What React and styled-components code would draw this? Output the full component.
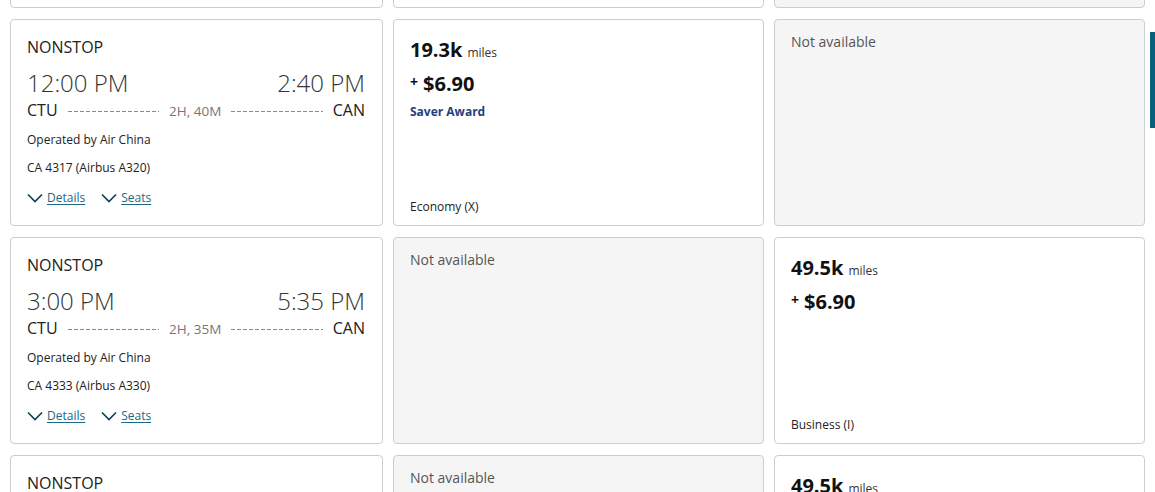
import styled, { createGlobalStyle } from "styled-components"

const Global = createGlobalStyle`
    html, body {
        margin: 0;
        padding: 0;
        background: #fff;
        overflow: hidden;
        font-family: "Open Sans", "Liberation Sans", sans-serif;
        color: #333;
    }
`

const Page = styled.div`
    height: 492px;
    overflow: hidden;
    padding: 0 10px;
`

const Results = styled.div`
    display: grid;
    grid-template-columns: 373px 371px 371px;
    grid-auto-rows: 207px;
    column-gap: 10px;
    row-gap: 11px;
    margin-top: -199px;
`

const Card = styled.div`
    box-sizing: border-box;
    border: 1px solid #cdcdcd;
    border-radius: 4px;
    background-color: ${(p) => (p.$muted ? "#f5f5f5" : "#fff")};
    display: flex;
    flex-direction: column;
`

const FlightCard = styled(Card)`
    padding: 16px 17px 14px 16px;
`

const Stops = styled.div`
    font-size: 16px;
    line-height: 22px;
    color: #222;
`

const Times = styled.div`
    display: flex;
    justify-content: space-between;
    margin-top: 11px;
    font-size: 24px;
    line-height: 28px;
    font-weight: 300;
    color: #333;
`

const Route = styled.div`
    display: flex;
    align-items: center;
    margin-top: 2px;
    font-size: 16px;
    line-height: 20px;
    color: #222;
`

const Dashes = styled.span`
    flex: 1;
    height: 1px;
    margin: 2px 10px 0;
    background: repeating-linear-gradient(to right, #8a8a8a 0 4px, transparent 4px 6px);
`

const Duration = styled.span`
    font-size: 13.5px;
    color: #777;
    margin-top: 2px;
`

const Info = styled.div`
    margin-top: ${(p) => p.$gap || 10}px;
    font-size: 12px;
    line-height: 18px;
    color: #222;
`

const Links = styled.div`
    display: flex;
    gap: 16px;
    margin-top: 12px;
`

const Toggle = styled.a`
    display: flex;
    align-items: center;
    gap: 4px;
    font-size: 12px;
    line-height: 18px;
    color: #1c6a85;
    text-decoration: underline;
    text-underline-offset: 2px;
    cursor: pointer;
    svg {
        display: block;
    }
`

const FareCard = styled(Card)`
    padding: 17px 16px 9px;
`

const Miles = styled.div`
    display: flex;
    align-items: baseline;
    gap: 5px;
    font-size: 20px;
    line-height: 26px;
    font-weight: 700;
    color: #111;
    span {
        font-size: 12px;
        font-weight: 400;
        color: #333;
    }
`

const Price = styled.div`
    display: flex;
    align-items: flex-start;
    gap: 5px;
    margin-top: 5px;
    font-size: 20px;
    line-height: 26px;
    font-weight: 700;
    color: #111;
`

const Plus = styled.span`
    font-size: 14px;
    line-height: 22px;
`

const Award = styled.div`
    margin-top: 6px;
    font-size: 12px;
    line-height: 18px;
    font-weight: 700;
    color: #243f7c;
`

const Cabin = styled.div`
    margin-top: auto;
    font-size: 12px;
    line-height: 18px;
    color: #222;
`

const Unavailable = styled(Card)`
    padding: 12px 16px;
    font-size: 14px;
    line-height: 20px;
    color: #555;
`

const SideTab = styled.div`
    position: fixed;
    top: 32px;
    right: 0;
    width: 5px;
    height: 96px;
    background: #0a5f7e;
`

function Chevron() {
    return (
        <svg width="16" height="10" viewBox="0 0 16 10" fill="none">
            <path d="M1 1.5 L8 8.5 L15 1.5" stroke="#0d4557" strokeWidth="1.7" />
        </svg>
    )
}

const rows = [
    {
        dep: "8:15 AM", arr: "10:50 AM", dur: "2H, 35M", flight: "CA 4311 (Airbus A321)",
        fares: [{ miles: "19.3k", cabin: "Economy (X)", saver: true }, null],
    },
    {
        dep: "12:00 PM", arr: "2:40 PM", dur: "2H, 40M", flight: "CA 4317 (Airbus A320)",
        fares: [{ miles: "19.3k", cabin: "Economy (X)", saver: true }, null],
    },
    {
        dep: "3:00 PM", arr: "5:35 PM", dur: "2H, 35M", flight: "CA 4333 (Airbus A330)",
        fares: [null, { miles: "49.5k", cabin: "Business (I)" }],
    },
    {
        dep: "6:30 PM", arr: "9:05 PM", dur: "2H, 35M", flight: "CA 4339 (Airbus A330)",
        fares: [null, { miles: "49.5k", cabin: "Business (I)" }],
    },
]

function Fare({ fare }) {
    if (!fare) return <Unavailable $muted>Not available</Unavailable>
    return (
        <FareCard>
            <Miles>{fare.miles}<span>miles</span></Miles>
            <Price><Plus>+</Plus>$6.90</Price>
            {fare.saver && <Award>Saver Award</Award>}
            <Cabin>{fare.cabin}</Cabin>
        </FareCard>
    )
}

export default function App() {
    return <>
        <Global />
        <Page>
            <Results>
                {rows.map((r, i) => (
                    <>
                        <FlightCard key={"f" + i}>
                            <Stops>NONSTOP</Stops>
                            <Times>
                                <span>{r.dep}</span>
                                <span>{r.arr}</span>
                            </Times>
                            <Route>
                                <span>CTU</span>
                                <Dashes />
                                <Duration>{r.dur}</Duration>
                                <Dashes />
                                <span>CAN</span>
                            </Route>
                            <Info $gap={10}>Operated by Air China</Info>
                            <Info>{r.flight}</Info>
                            <Links>
                                <Toggle><Chevron />Details</Toggle>
                                <Toggle><Chevron />Seats</Toggle>
                            </Links>
                        </FlightCard>
                        <Fare key={"a" + i} fare={r.fares[0]} />
                        <Fare key={"b" + i} fare={r.fares[1]} />
                    </>
                ))}
            </Results>
        </Page>
        <SideTab />
    </>
}
